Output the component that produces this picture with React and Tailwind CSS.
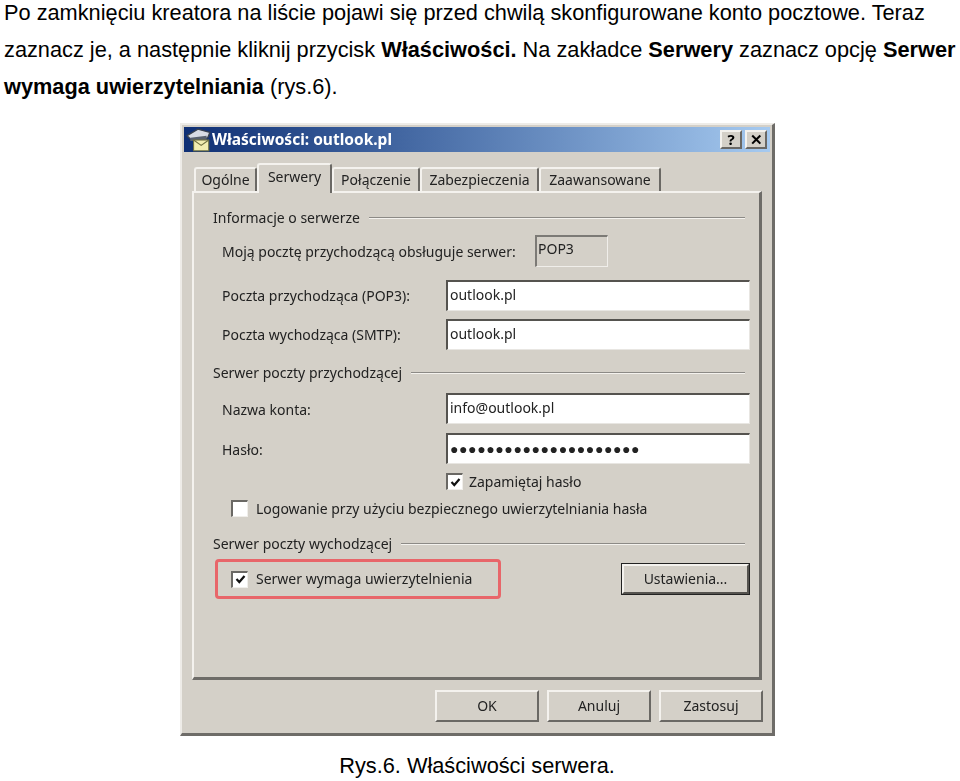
const dialogFont = { fontFamily: '"Noto Sans", sans-serif' };

function Raised({ className = '', children }) {
  return (
    <div className={`flex items-center justify-center border-t-2 border-l-2 border-r-2 border-b-2 border-t-[#f4f2ee] border-l-[#f4f2ee] border-r-[#6a6864] border-b-[#6a6864] bg-[#d4d0c8] ${className}`}>
      {children}
    </div>
  );
}

function Tab({ label, active, className = '' }) {
  return (
    <div
      className={`flex items-center justify-center rounded-t-[3px] border-t-2 border-l-2 border-r-2 border-t-[#f4f2ee] border-l-[#f4f2ee] border-r-[#6a6864] bg-[#d4d0c8] ${active ? 'z-10 -mb-[2px] h-[30px] pb-[5px]' : 'h-[24px]'} ${className}`}
    >
      {label}
    </div>
  );
}

function GroupTitle({ label, className = '' }) {
  return (
    <div className={`flex h-[20px] items-center gap-[9px] pl-[19px] pr-[14px] ${className}`}>
      <span>{label}</span>
      <div className="h-[2px] flex-1 border-t border-t-[#8c8a86] border-b border-b-[#f4f2ee]" />
    </div>
  );
}

function Field({ label, value, className = '', labelClass = '', password }) {
  return (
    <div className={`flex items-center pl-[28px] pr-[9px] ${className}`}>
      <span className={`w-[224px] ${labelClass}`}>{label}</span>
      <div className={`flex h-[31px] flex-1 items-center border-t-2 border-l-2 border-t-[#55534f] border-l-[#55534f] border-b border-r border-b-[#e8e6e2] border-r-[#e8e6e2] bg-white pl-[2px] ${password ? 'tracking-[0.6px]' : 'pb-[3px]'}`}>
        {value}
      </div>
    </div>
  );
}

function Check({ checked }) {
  return (
    <div className="flex h-[17px] w-[17px] shrink-0 items-center justify-center border-t-2 border-l-2 border-t-[#6a6864] border-l-[#6a6864] border-b border-r border-b-[#f0eeea] border-r-[#f0eeea] bg-white">
      {checked && (
        <svg width="11" height="11" viewBox="0 0 11 11">
          <path d="M1.5 5 L4.3 8 L9.5 2" fill="none" stroke="#111" strokeWidth="2.2" />
        </svg>
      )}
    </div>
  );
}

function MailIcon() {
  return (
    <svg width="26" height="24" viewBox="0 0 24 22" className="shrink-0">
      <path d="M1 7 L11 1 L22 4 L20 9 L5 11 Z" fill="#d8dce4" stroke="#39424f" strokeWidth="1.2" />
      <path d="M4 9 L19 7 L19 11 L4 12 Z" fill="#59626f" />
      <rect x="7" y="11" width="14" height="10" fill="#f2eeb0" stroke="#6f7040" />
      <path d="M7 11 L14 16 L21 11" fill="none" stroke="#6f7040" />
    </svg>
  );
}

export default function App() {
  return (
    <div className="h-[781px] w-[960px] overflow-hidden bg-white text-black" style={{ fontFamily: '"Liberation Sans", Arial, sans-serif' }}>
      <p className="-mt-[6px] whitespace-nowrap pl-[4px] text-[21.75px] leading-[37px]">
        Po zamknięciu kreatora na liście pojawi się przed chwilą skonfigurowane konto pocztowe. Teraz
        <br />
        zaznacz je, a następnie kliknij przycisk <b>Właściwości.</b> Na zakładce <b>Serwery</b> zaznacz opcję <b>Serwer</b>
        <br />
        <b>wymaga uwierzytelniania</b> (rys.6).
      </p>

      {/* Dialog */}
      <div
        className="ml-[180px] mt-[18px] h-[613px] w-[595px] whitespace-nowrap border-t-2 border-l-2 border-t-[#eeece8] border-l-[#eeece8] border-r-[3px] border-b-[3px] border-r-[#6e6c68] border-b-[#6e6c68] bg-[#d4d0c8] px-[2px] pt-[2px] text-[14px] leading-none text-[#222] blur-[0.5px]"
        style={dialogFont}
      >
        {/* Title bar */}
        <div className="flex h-[25px] items-center bg-gradient-to-r from-[#0f2f74] to-[#a6caf0] pl-[2px] pr-[3px]">
          <MailIcon />
          <span className="flex-1 text-[15.5px] font-bold text-white">Właściwości: outlook.pl</span>
          <Raised className="h-[19px] w-[22px] text-[15px] font-bold text-black">?</Raised>
          <Raised className="ml-[3px] h-[19px] w-[22px] text-[15px] font-bold text-black">✕</Raised>
        </div>

        {/* Tabs */}
        <div className="relative mt-[13px] flex h-[26px] items-end pl-[10px]">
          <Tab label="Ogólne" className="w-[63px]" />
          <Tab label="Serwery" active className="w-[75px]" />
          <Tab label="Połączenie" className="w-[88px]" />
          <Tab label="Zabezpieczenia" className="w-[119px]" />
          <Tab label="Zaawansowane" className="w-[122px]" />
        </div>

        {/* Panel */}
        <div className="ml-[8px] h-[489px] w-[570px] border-t-2 border-l-2 border-t-[#f4f2ee] border-l-[#f4f2ee] border-r-[3px] border-b-[3px] border-r-[#6e6c68] border-b-[#6e6c68]">
          <GroupTitle label="Informacje o serwerze" className="mt-[15px]" />

          <div className="mt-[7px] flex items-center pl-[28px]">
            <span className="w-[313px] pt-[2px]">Moją pocztę przychodzącą obsługuje serwer:</span>
            <div className="h-[32px] w-[73px] border-t-2 border-l-2 border-t-[#7c7a76] border-l-[#7c7a76] border-b border-r border-b-[#f0eeea] border-r-[#f0eeea] pl-[1px] pt-[5px]">POP3</div>
          </div>

          <Field label="Poczta przychodząca (POP3):" value="outlook.pl" className="mt-[13px]" />
          <Field label="Poczta wychodząca (SMTP):" value="outlook.pl" className="mt-[8px]" />

          <GroupTitle label="Serwer poczty przychodzącej" className="mt-[13px]" />

          <Field label="Nazwa konta:" value="info@outlook.pl" labelClass="pt-[2px]" className="mt-[10px]" />
          <Field label="Hasło:" value="●●●●●●●●●●●●●●●●●●●●●" labelClass="pt-[3px]" password className="mt-[9px]" />

          <div className="mt-[9px] flex h-[17px] items-center gap-[6px] pl-[252px]">
            <Check checked />
            <span>Zapamiętaj hasło</span>
          </div>
          <div className="mt-[10px] flex h-[17px] items-center gap-[8px] pl-[37px]">
            <Check />
            <span>Logowanie przy użyciu bezpiecznego uwierzytelniania hasła</span>
          </div>

          <GroupTitle label="Serwer poczty wychodzącej" className="mt-[17px]" />

          <div className="mt-[5px] flex items-center pr-[9px]">
            <div className="relative ml-[21px] flex h-[40px] w-[286px] items-center gap-[8px] rounded-[4px] border-[3px] border-[#e8666a] pl-[13px]">
              <Check checked />
              <span>Serwer wymaga uwierzytelnienia</span>
            </div>
            <div className="ml-auto h-[32px] w-[129px] border border-[#222]">
              <Raised className="h-full w-full border-r-[#55534f] border-b-[#55534f]">Ustawienia...</Raised>
            </div>
          </div>
        </div>

        {/* Buttons */}
        <div className="mt-[10px] flex justify-end gap-[8px] pr-[7px]">
          <Raised className="h-[32px] w-[104px]">OK</Raised>
          <Raised className="h-[32px] w-[104px]">Anuluj</Raised>
          <Raised className="h-[32px] w-[104px]">Zastosuj</Raised>
        </div>
      </div>

      <p className="mt-[18px] pr-[6px] text-center text-[21.75px] leading-[24px]">Rys.6. Właściwości serwera.</p>
    </div>
  );
}
